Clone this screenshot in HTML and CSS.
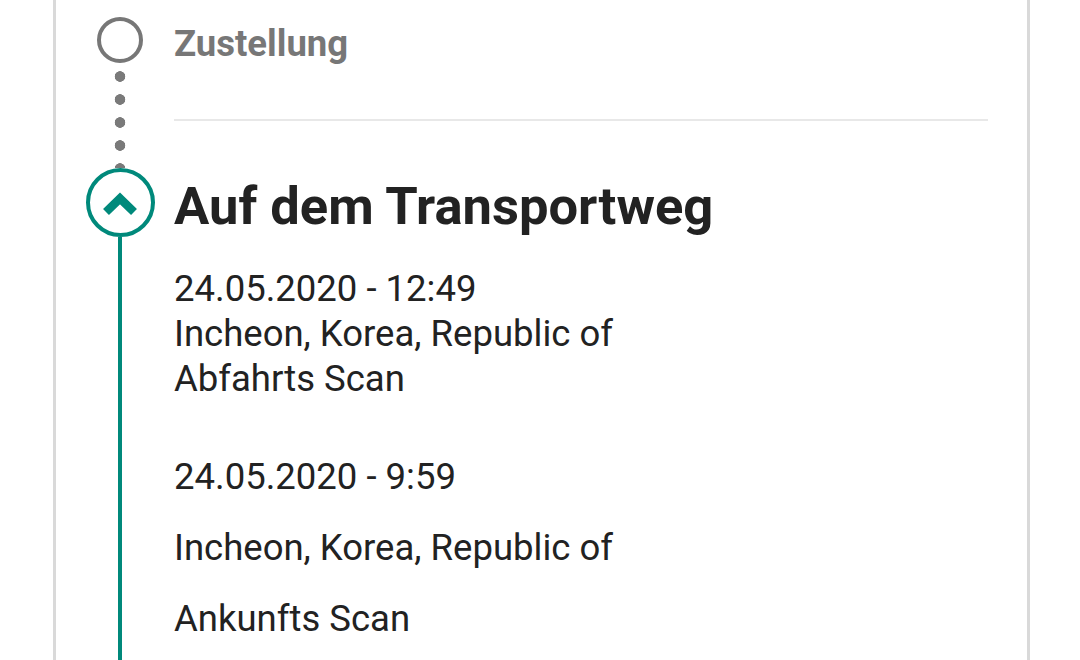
FILE: index.html
```html
<!DOCTYPE html>
<html lang="de">
  <head>
    <meta charset="UTF-8" />
    <meta name="viewport" content="width=device-width, initial-scale=1.0" />
    <title>Sendungsverfolgung</title>
    <link rel="stylesheet" href="styles.css">
  </head>
  <body>
    <div class="card">
      <!-- Schritt: Zustellung (noch offen) -->
      <div class="step step-open">
        <div class="rail">
          <span class="ring"></span>
          <span class="dots"></span>
        </div>
        <div class="step-body">
          <h3 class="step-title">Zustellung</h3>
          <hr class="divider" />
        </div>
      </div>

      <!-- Schritt: Auf dem Transportweg (aktiv) -->
      <div class="step step-active">
        <div class="rail">
          <span class="ring ring-active">
            <svg viewBox="0 0 36 26" width="36" height="26">
              <path d="M4 22 L18 8.5 L32 22" fill="none" stroke="#00897b" stroke-width="8.5" />
            </svg>
          </span>
          <span class="line"></span>
        </div>
        <div class="step-body">
          <h2 class="step-heading">Auf dem Transportweg</h2>

          <div class="event">
            <p>24.05.2020 - 12:49</p>
            <p>Incheon, Korea, Republic of</p>
            <p>Abfahrts Scan</p>
          </div>

          <div class="event event-spaced">
            <p>24.05.2020 - 9:59</p>
            <p>Incheon, Korea, Republic of</p>
            <p>Ankunfts Scan</p>
          </div>
        </div>
      </div>
    </div>
  </body>
</html>
```

FILE: styles.css
```css
* {
  margin: 0;
  padding: 0;
  box-sizing: border-box;
}

body {
  background: #ffffff;
  font-family: Roboto, "Noto Sans", sans-serif;
  color: #222222;
  overflow: hidden;
}

.card {
  margin-left: 53px;
  width: 977px;
  min-height: 100vh;
  border-left: 3px solid #d9d9d9;
  border-right: 3px solid #d9d9d9;
  padding: 0 39px 0 30px;
}

.step {
  display: flex;
  gap: 20px;
}

.rail {
  width: 68px;
  flex-shrink: 0;
  display: flex;
  flex-direction: column;
  align-items: center;
}

.step-body {
  flex: 1;
}

/* offener Schritt */
.step-open .rail {
  padding-top: 17px;
}

.ring {
  width: 46px;
  height: 46px;
  border: 4px solid #777777;
  border-radius: 50%;
  background: #ffffff;
}

.dots {
  flex: 1;
  width: 12px;
  margin-top: 2px;
  background-image: radial-gradient(circle, #7a7a7a 5px, transparent 5.6px);
  background-size: 12px 23px;
  background-repeat: repeat-y;
}

.step-title {
  padding-top: 24px;
  font-size: 36.5px;
  line-height: 40px;
  font-weight: 700;
  color: #777777;
}

.divider {
  border: none;
  height: 2px;
  background: #e8e8e8;
  margin: 55px 0 47px;
}

/* aktiver Schritt */
.ring-active {
  width: 69px;
  height: 69px;
  border: 4px solid #00897b;
  display: flex;
  align-items: center;
  justify-content: center;
}

.ring-active svg {
  margin-top: 0;
}

.line {
  flex: 1;
  width: 4px;
  background: #00897b;
  min-height: 430px;
}

.step-heading {
  padding-top: 4px;
  font-size: 52.5px;
  line-height: 68px;
  font-weight: 700;
  color: #222222;
}

.event {
  margin-top: 26px;
  font-size: 36.5px;
  line-height: 45px;
}

.event-spaced {
  margin-top: 53px;
}

.event-spaced p + p {
  margin-top: 26px;
}
```
